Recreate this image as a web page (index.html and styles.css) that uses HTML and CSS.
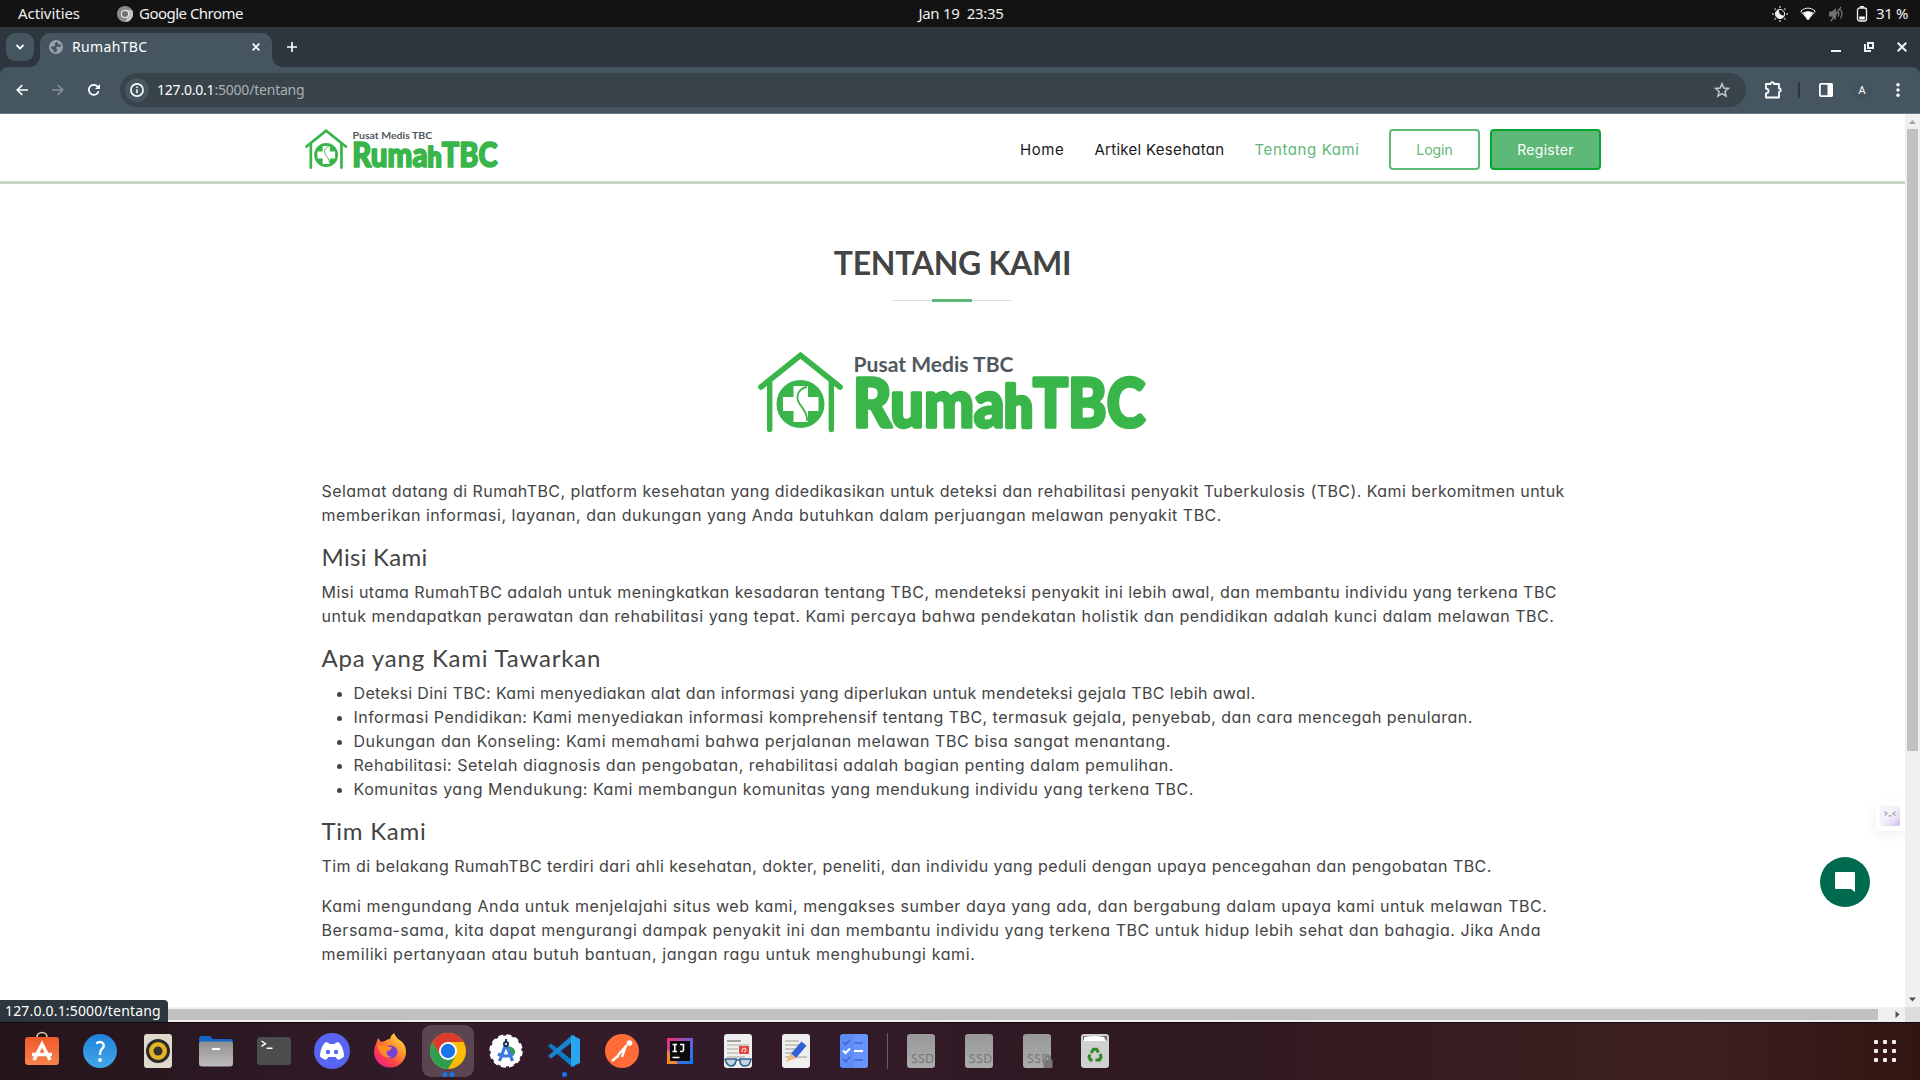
FILE: index.html
```html
<!DOCTYPE html>
<html lang="id">
<head>
<meta charset="utf-8">
<title>RumahTBC</title>
<link rel="stylesheet" href="styles.css">
</head>
<body>
<svg class="defs" width="0" height="0">
  <defs>
    <linearGradient id="orange" x1="0" y1="0" x2="0" y2="1"><stop offset="0" stop-color="#f0592b"/><stop offset="1" stop-color="#f7824d"/></linearGradient>
    <linearGradient id="blue" x1="0" y1="0" x2="0" y2="1"><stop offset="0" stop-color="#1f83dc"/><stop offset="1" stop-color="#43a7ea"/></linearGradient>
    <linearGradient id="grey" x1="0" y1="0" x2="0" y2="1"><stop offset="0" stop-color="#8f8f8f"/><stop offset="1" stop-color="#bdbdbd"/></linearGradient>
    <linearGradient id="disk" x1="0" y1="0" x2="0" y2="1"><stop offset="0" stop-color="#989898"/><stop offset="1" stop-color="#adadad"/></linearGradient>
    <linearGradient id="fox" x1="1" y1="0" x2="0.2" y2="1"><stop offset="0" stop-color="#fff04d"/><stop offset="0.4" stop-color="#ff9a2b"/><stop offset="0.75" stop-color="#ff3b4e"/><stop offset="1" stop-color="#e5208a"/></linearGradient>
    <linearGradient id="idea" x1="0" y1="0" x2="1" y2="1"><stop offset="0" stop-color="#fe2d6b"/><stop offset="0.5" stop-color="#6d5fd0"/><stop offset="1" stop-color="#087cfa"/></linearGradient>
    <linearGradient id="face" x1="0" y1="0" x2="1" y2="1"><stop offset="0.45" stop-color="#f1f4f8"/><stop offset="0.75" stop-color="#e6dbf6"/><stop offset="1" stop-color="#cfaef0"/></linearGradient>
    <symbol id="brand" viewBox="0 0 390 82">
      <g fill="none" stroke="#39b54a" stroke-linecap="round" stroke-linejoin="miter">
        <path stroke-width="5.6" d="M3 35 42.500 3.300 82 35"/>
        <path stroke-width="5.400" d="M11.700 30V77.500M73.300 30V77.500"/>
      </g>
      <circle cx="42.500" cy="52" r="24" fill="#39b54a"/>
      <path fill="#fff" d="M35.500 34h14.500v11h10.500v14h-10.500v11h-14.500v-11h-10.500v-14h10.500z"/>
      <path fill="none" stroke="#39b54a" stroke-width="1.800" d="M49 35C42 36 38 42 40 48.500 42 55 50 59 49 69"/>
      <text class="brand-sub" x="95.500" y="20.300" textLength="160" lengthAdjust="spacingAndGlyphs">Pusat Medis TBC</text>
      <text class="brand-name" x="95" y="75.300" textLength="180" lengthAdjust="spacingAndGlyphs">Ruma<tspan class="brand-h">h</tspan></text>
      <text class="brand-name" x="275" y="75.300" textLength="112" lengthAdjust="spacingAndGlyphs">TBC</text>
    </symbol>
  </defs>
</svg>

<div class="topbar">
  <div class="topbar-left">
    <span class="activities">Activities</span>
    <svg width="16" height="16" viewBox="0 0 16 16"><circle cx="8" cy="8" r="8" fill="#8b8b8b"/><path d="M8 4h7A8 8 0 0 1 8 16l3.500-6z" fill="#c4c4c4"/><circle cx="8" cy="8" r="4" fill="#eee"/><circle cx="8" cy="8" r="3" fill="#6f6f6f"/></svg>
    <span class="appname">Google Chrome</span>
  </div>
  <span class="clock">Jan 19&nbsp; 23:35</span>
  <div class="tray">
    <svg width="16" height="16" viewBox="0 0 16 16"><circle cx="8" cy="8" r="4.600" fill="none" stroke="#f2f2f2" stroke-width="1"/><path d="M7 3.400a4.600 4.600 0 1 0 5.600 6A4.800 4.800 0 0 1 7 3.400" fill="#f2f2f2"/><path d="M8 0v2M8 14v2M0 8h2M14 8h2M2.500 2.500l1.300 1.300M12.200 12.200l1.300 1.300M13.500 2.500l-1.300 1.300M3.800 12.200l-1.300 1.300" stroke="#aaa" stroke-width="1.600"/></svg>
    <svg width="16" height="16" viewBox="0 0 16 16"><path d="M.8 5C5 1.200 11 1.200 15.200 5L8 14z" fill="none" stroke="#eee" stroke-width="1"/><path d="M3 6.700c3-2 7-2 10 0L8 14z" fill="#fff"/></svg>
    <svg width="16" height="16" viewBox="0 0 16 16"><path d="M1 5.500h3L8 2v12l-4-3.500H1z" fill="#6f6f6f"/><path d="M10 5.500q1.600 2.500 0 5M12.500 3.500q3 4.500 0 9M3 15 13 1" fill="none" stroke="#777" stroke-width="1.300"/></svg>
    <svg width="12" height="16" viewBox="0 0 12 16"><rect x="1.500" y="2" width="9" height="13" rx="2" fill="none" stroke="#f2f2f2" stroke-width="1.300"/><path d="M4 .7h4" stroke="#f2f2f2" stroke-width="1.400"/><path d="M3.200 10.500h5.600v3H3.200z" fill="#fff"/></svg>
    <span class="percent">31 %</span>
  </div>
</div>

<div class="tabstrip">
  <div class="tab-search"><svg width="10" height="10" viewBox="0 0 10 10"><path d="M1.500 3 5 6.500 8.500 3" fill="none" stroke="#fff" stroke-width="1.800"/></svg></div>
  <div class="tab">
    <svg width="14" height="14" viewBox="0 0 14 14"><circle cx="7" cy="7" r="7" fill="#9aa3ab"/><path d="M8 1.500 5.500 3.500l1 1.500-2 1.500H2q0 3 2.500 3.200v2.500q3 .5 4-2L7 8l1.500-1.500L12 7l-.5-3-2 .5z" fill="#455660"/></svg>
    <span class="tab-title">RumahTBC</span>
    <svg class="tab-close" width="8" height="8" viewBox="0 0 8 8"><path d="M.7.7l6.600 6.600M7.300.7.7 7.300" stroke="#fff" stroke-width="1.700"/></svg>
  </div>
  <svg class="new-tab" width="10" height="10" viewBox="0 0 10 10"><path d="M5 0v10M0 5h10" stroke="#fff" stroke-width="1.600"/></svg>
  <div class="window-buttons">
    <svg width="10" height="10" viewBox="0 0 10 10"><path d="M0 9h10" stroke="#f0f0f0" stroke-width="2"/></svg>
    <svg width="10" height="10" viewBox="0 0 10 10"><path d="M4 1h5v5H4zM1 2v7h6" fill="none" stroke="#f0f0f0" stroke-width="2"/></svg>
    <svg width="10" height="10" viewBox="0 0 10 10"><path d="M.7.700l8.600 8.600M9.300.7.7 9.300" stroke="#f0f0f0" stroke-width="2"/></svg>
  </div>
</div>

<div class="toolbar">
  <div class="nav-buttons">
    <svg width="12" height="12" viewBox="0 0 12 12"><path d="M12 6H1.500M6.300 1 1.300 6l5 5" fill="none" stroke="#fff" stroke-width="1.700"/></svg>
    <svg width="12" height="12" viewBox="0 0 12 12"><path d="M0 6h10.500M5.700 1l5 5-5 5" fill="none" stroke="#84919a" stroke-width="1.700"/></svg>
    <svg width="12" height="12" viewBox="0 0 12 12"><path d="M10.600 7.300A5 5 0 1 1 9.800 2.800L11 4.300" fill="none" stroke="#fff" stroke-width="1.700"/><path d="M12 0v5H7z" fill="#fff"/></svg>
  </div>
  <div class="omnibox">
    <span class="site-info"><svg width="14" height="14" viewBox="0 0 14 14"><circle cx="7" cy="7" r="6.100" fill="none" stroke="#fff" stroke-width="1.600"/><path d="M7 6.300v4M7 3.500v1.600" stroke="#fff" stroke-width="1.500"/></svg></span>
    <span class="url"><b>127.0.0.1</b>:5000/tentang</span>
    <svg class="star" width="16" height="16" viewBox="0 0 16 16"><path d="M8 1.700l1.800 4.400 4.700.3-3.600 3.100 1.200 4.600L8 11.600l-4.100 2.500 1.200-4.600L1.500 6.400l4.700-.3z" fill="none" stroke="#c3c8cb" stroke-width="1.500"/></svg>
  </div>
  <div class="actions">
    <svg width="18" height="18" viewBox="0 0 18 18"><path d="M2 3h4.500a1.500 1.500 0 0 1 3.500 0H15v4.500a1.700 1.700 0 0 1 0 3.500v5.500H2v-4.200q2.600-.3 2.600-2.300T2 7.700z" fill="none" stroke="#fff" stroke-width="1.800" stroke-linejoin="round"/></svg>
    <i class="separator"></i>
    <svg width="16" height="16" viewBox="0 0 16 16"><rect x="1.900" y="1.900" width="12.200" height="12.200" rx="1" fill="none" stroke="#fff" stroke-width="1.800"/><path d="M9.500 1.500h5v13h-5z" fill="#fff"/></svg>
    <span class="avatar">A</span>
    <svg width="4" height="14" viewBox="0 0 4 14"><g fill="#fff"><circle cx="2" cy="1.800" r="1.700"/><circle cx="2" cy="7" r="1.700"/><circle cx="2" cy="12.200" r="1.700"/></g></svg>
  </div>
</div>

<div class="view">
  <div class="page">
    <header class="header">
      <svg class="header-logo" viewBox="0 0 390 82"><use href="#brand"/></svg>
      <nav class="menu">
        <a class="m1">Home</a><a class="m2">Artikel Kesehatan</a><a class="m3 active">Tentang Kami</a>
      </nav>
      <a class="btn login">Login</a>
      <a class="btn register">Register</a>
    </header>
    <main class="about">
      <h2 class="title">TENTANG KAMI</h2>
      <div class="divider"><i></i></div>
      <svg class="hero-logo" viewBox="0 0 390 82"><use href="#brand"/></svg>
      <p><span class="line l1">Selamat datang di RumahTBC, platform kesehatan yang didedikasikan untuk deteksi dan rehabilitasi penyakit Tuberkulosis (TBC). Kami berkomitmen untuk</span>
      <span class="line l2">memberikan informasi, layanan, dan dukungan yang Anda butuhkan dalam perjuangan melawan penyakit TBC.</span></p>
      <h4 class="h-misi">Misi Kami</h4>
      <p><span class="line l3">Misi utama RumahTBC adalah untuk meningkatkan kesadaran tentang TBC, mendeteksi penyakit ini lebih awal, dan membantu individu yang terkena TBC</span>
      <span class="line l4">untuk mendapatkan perawatan dan rehabilitasi yang tepat. Kami percaya bahwa pendekatan holistik dan pendidikan adalah kunci dalam melawan TBC.</span></p>
      <h4 class="h-apa">Apa yang Kami Tawarkan</h4>
      <ul>
        <li><span class="line l5">Deteksi Dini TBC: Kami menyediakan alat dan informasi yang diperlukan untuk mendeteksi gejala TBC lebih awal.</span></li>
        <li><span class="line l6">Informasi Pendidikan: Kami menyediakan informasi komprehensif tentang TBC, termasuk gejala, penyebab, dan cara mencegah penularan.</span></li>
        <li><span class="line l7">Dukungan dan Konseling: Kami memahami bahwa perjalanan melawan TBC bisa sangat menantang.</span></li>
        <li><span class="line l8">Rehabilitasi: Setelah diagnosis dan pengobatan, rehabilitasi adalah bagian penting dalam pemulihan.</span></li>
        <li><span class="line l9">Komunitas yang Mendukung: Kami membangun komunitas yang mendukung individu yang terkena TBC.</span></li>
      </ul>
      <h4 class="h-tim">Tim Kami</h4>
      <p><span class="line l10">Tim di belakang RumahTBC terdiri dari ahli kesehatan, dokter, peneliti, dan individu yang peduli dengan upaya pencegahan dan pengobatan TBC.</span></p>
      <p><span class="line l11">Kami mengundang Anda untuk menjelajahi situs web kami, mengakses sumber daya yang ada, dan bergabung dalam upaya kami untuk melawan TBC.</span>
      <span class="line l12">Bersama-sama, kita dapat mengurangi dampak penyakit ini dan membantu individu yang terkena TBC untuk hidup lebih sehat dan bahagia. Jika Anda</span>
      <span class="line l13">memiliki pertanyaan atau butuh bantuan, jangan ragu untuk menghubungi kami.</span></p>
    </main>
  </div>
  <div class="vscroll">
    <svg width="15" height="15" viewBox="0 0 15 15"><path d="M4 10h7L7.500 6z" fill="#a3a3a3"/></svg>
    <i class="thumb"></i>
    <svg class="end" width="15" height="15" viewBox="0 0 15 15"><path d="M4 5.500h7L7.500 9.500z" fill="#505050"/></svg>
  </div>
  <div class="hscroll"><i class="thumb"></i><svg width="15" height="15" viewBox="0 0 15 15"><path d="M5.500 4v7L9.500 7.500z" fill="#505050"/></svg></div>
  <div class="corner"></div>
  <div class="side-tab"><svg width="20" height="20" viewBox="0 0 20 20"><rect width="20" height="20" rx="2.500" fill="url(#face)"/><path d="M4.500 5.500 7 7.500 4.500 9.500M15.500 5.500 13 7.500l2.500 2M8.500 9.500q1.500 1.200 3 0" fill="none" stroke="#a2a5ab" stroke-width="1.300"/></svg></div>
  <div class="chat"><svg width="20" height="20" viewBox="0 0 20 20"><path d="M1 0h18q1 0 1 1v19l-4-3H1q-1 0-1-1V1q0-1 1-1z" fill="#fff"/></svg></div>
  <div class="status">127.0.0.1:5000/tentang</div>
</div>

<div class="dock">
  <span><svg viewBox="-22 -22 44 44"><path d="M-5-12v-2a5 4.500 0 0 1 10 0v2" fill="none" stroke="#e8c9a8" stroke-width="1.600"/><rect x="-17" y="-14" width="34" height="28" rx="3" fill="url(#orange)"/><path d="M-8 9 0-7 8 9M-10 3.500h20" fill="none" stroke="#fff" stroke-width="3.400"/></svg></span>
  <span><svg viewBox="-22 -22 44 44"><circle r="17" fill="url(#blue)"/><path d="M-3.800-7.500q4-3 7 0 1.500 3.500-1.500 5.500Q0 0 0 4" fill="none" stroke="#fff" stroke-width="2.400"/><circle cy="9" r="1.900" fill="#fff"/></svg></span>
  <span><svg viewBox="-22 -22 44 44"><rect x="-14" y="-17" width="28" height="34" rx="3" fill="#dfd9cc"/><circle r="12" fill="#2b2b2b"/><circle r="9" fill="#e6b422"/><circle r="4.500" fill="#333"/></svg></span>
  <span><svg viewBox="-22 -22 44 44"><path d="M-17-12q0-3 3-3h8l3 3h17q3 0 3 3v5h-34z" fill="#1565c8"/><rect x="-17" y="-9.500" width="34" height="25" rx="3" fill="url(#grey)"/><path d="M-4-2h8" stroke="#fff" stroke-width="2.200"/></svg></span>
  <span><svg viewBox="-22 -22 44 44"><rect x="-17" y="-14" width="34" height="28" rx="3" fill="#4c4c4c"/><path d="M-12.500-10l4 2.700-4 2.700M-7.500-2.800h6" fill="none" stroke="#fff" stroke-width="1.400"/></svg></span>
  <span><svg viewBox="-22 -22 44 44"><circle r="18" fill="#5865f2"/><path d="M-7-8.500Q-4-9.500-2.500-7h5Q4-9.500 7-8.500q5 6 5 14-3 3-6.500 3.200L3.800 6h-7.600l-1.700 2.700Q-9 8.500-12 5.500-12-2.500-7-8.500z" fill="#fff"/><circle cx="-4" cy="1" r="2.200" fill="#5865f2"/><circle cx="4" cy="1" r="2.200" fill="#5865f2"/></svg></span>
  <span><svg viewBox="-22 -22 44 44"><path d="M-14-7l2-6 3 4 4-1q2-2 5-2 1-4 4-6 2 5 7 8 5 4 5 11A16 15.500 0 0 1-16 1q0-4 2-8z" fill="url(#fox)"/><circle cx="1" cy="1" r="6.500" fill="#7542d8"/><path d="M-13-6q6-1 9 2h6q-1 4-5 4-2 5 5 6-9 2-12-5z" fill="#ff8c25"/></svg></span>
  <span class="focused"><svg viewBox="-22 -22 44 44"><circle r="18" fill="#fbbc05"/><path d="M-15.600-9A18 18 0 0 0 0 18L7.800 4.500H-7.800z" fill="#2f9e4f"/><path d="M-15.600-9A18 18 0 0 1 15.600-9H0L-7.800 4.500z" fill="#db3a2e"/><circle r="9" fill="#fff"/><circle r="7.200" fill="#1a73e8"/></svg><i></i><i></i></span>
  <span><svg viewBox="-22 -22 44 44"><circle r="15.500" fill="#fff"/><circle r="15.500" fill="none" stroke="#fff" stroke-width="2.400" stroke-dasharray="5 3.100"/><path d="M2-5q8 1 7 8L3 5z" fill="#3a9b54"/><path d="M-6.500 10 0-7 6.500 10M-8 3q8 4 15 0" fill="none" stroke="#3c78e0" stroke-width="3.200"/><circle cy="-7" r="3" fill="#20324f"/><path d="M0-12v5" stroke="#20324f" stroke-width="2"/><circle cy="-7" r="1.100" fill="#fff"/></svg></span>
  <span><svg viewBox="-22 -22 44 44"><path d="M-16-5l3-2.500L11 11v5L7 15z" fill="#0a7cc4"/><path d="M-16 5l3 2.500L11-11v-5l-4 1z" fill="#1586cf"/><path d="M7-16l9 4v24l-9 4V-16z" fill="#2ba5ee"/></svg><i></i></span>
  <span><svg viewBox="-22 -22 44 44"><circle r="17" fill="#ff6c37"/><circle cx="7.500" cy="-8" r="2.800" fill="#fff"/><path d="M5-6-4 4M3.500-4.500 0 6M-3 4l-7 6" stroke="#fff" stroke-width="2.400" fill="none"/></svg></span>
  <span><svg viewBox="-22 -22 44 44"><path d="M-13-13h26v26h-26z" fill="url(#idea)"/><path d="M-13-2v15h11z" fill="#f08a2c"/><path d="M-10-10h20v20h-20z" fill="#0b0b0d"/><path d="M-7.500-6.500h4.500M-5.200-6.500v7M-7.500.5h4.500M0-6.500h3.500v5.500q0 2-3.500 1.300M-7.500 6.500h7" stroke="#fff" stroke-width="1.600" fill="none"/></svg></span>
  <span><svg viewBox="-22 -22 44 44"><rect x="-14" y="-17" width="28" height="34" rx="3" fill="#efefef"/><path d="M-11-10H3" stroke="#8e897f" stroke-width="1.500"/><path d="M-11-6h22M-11-2H0M-11 2H0M-11 6h18" stroke="#c2bdb2" stroke-width="1.300"/><path d="M1-5h10v8H1z" fill="#e5443b"/><path d="M4 1q0-4 2-4t2 2-2 2" stroke="#fff" fill="none"/><path d="M-13 8h11v2q-1 5-5 5t-6-7M2 8h11q-1 7-6 7t-5-5zM-2 9h4" fill="#c3d3e0" stroke="#2c6091" stroke-width="1.500"/></svg></span>
  <span><svg viewBox="-22 -22 44 44"><rect x="-14" y="-17" width="28" height="34" rx="3" fill="#efefef"/><path d="M-11-10H3M-11-6H5M-11-2H0M-11 2h8M-11 6h22" stroke="#bcb7a8" stroke-width="1.300"/><path d="M-5 2.500 5.500-9.500l5 4.300L0 7z" fill="#2f62d6"/><path d="M-5 2.500 0 7l-10.500 4z" fill="#efb67c"/></svg></span>
  <span><svg viewBox="-22 -22 44 44"><rect x="-14" y="-17" width="28" height="34" rx="3" fill="#5f8df8"/><path d="M0-17h11q3 0 3 3v28q0 3-3 3H0z" fill="#6f9aff" opacity=".6"/><path d="M-11-9l2.500 2.500L-4-11M0-8h9M-11 8l2.500 2.500L-4 6M0 9h9" fill="none" stroke="#3f68cf" stroke-width="1.700"/><path d="M-11-.5-8.500 2-4-2.500M0 0h9" fill="none" stroke="#fff" stroke-width="2"/></svg></span>
  <b class="dock-sep"></b>
  <span><svg viewBox="-22 -22 44 44"><rect x="-14" y="-17" width="28" height="34" rx="3" fill="url(#disk)"/><text class="ssd" x="-10" y="12" textLength="23">SSD</text></svg></span>
  <span><svg viewBox="-22 -22 44 44"><rect x="-14" y="-17" width="28" height="34" rx="3" fill="url(#disk)"/><text class="ssd" x="-10" y="12" textLength="23">SSD</text></svg></span>
  <span><svg viewBox="-22 -22 44 44"><rect x="-14" y="-17" width="28" height="34" rx="3" fill="url(#disk)"/><text class="ssd" x="-10" y="12" textLength="23">SSD</text><path d="M6.500 9h9v8h-9z" fill="#777"/><path d="M8.500 9.500V7.500a2.500 2.500 0 0 1 5 0v2" fill="none" stroke="#777" stroke-width="1.600"/></svg></span>
  <span><svg viewBox="-22 -22 44 44"><rect x="-14" y="-17" width="28" height="34" rx="3" fill="#d0d0d0"/><path d="M-12-15h24v3q0 2-2 2h-20q-2 0-2-2z" fill="#6e6e6e"/><path d="M-11-14q11-2 20 0l2 4h-22z" fill="#fff"/><g fill="none" stroke="#2a8a24" stroke-width="3"><path d="M-4 2-1.500-1.800h3L3.500 1.500"/><path d="M5.200 3 6 6 4.500 9H.500"/><path d="M-2.500 9h-2L-6 6l1-2.500"/></g></svg></span>
  <svg class="grid-icon" width="24" height="24" viewBox="0 0 24 24"><g fill="#f2f0ef"><rect x="1" y="1" width="4" height="4" rx="1"/><rect x="10" y="1" width="4" height="4" rx="1"/><rect x="19" y="1" width="4" height="4" rx="1"/><rect x="1" y="10" width="4" height="4" rx="1"/><rect x="10" y="10" width="4" height="4" rx="1"/><rect x="19" y="10" width="4" height="4" rx="1"/><rect x="1" y="19" width="4" height="4" rx="1"/><rect x="10" y="19" width="4" height="4" rx="1"/><rect x="19" y="19" width="4" height="4" rx="1"/></g></svg>
</div>
</body>
</html>
```
FILE: styles.css
```css
* { box-sizing: border-box; }
body { margin: 0; width: 1920px; height: 1080px; overflow: hidden; display: flex; flex-direction: column; background: #2c363c; font-family: Inter, sans-serif; }
svg { display: block; flex: none; }
.defs { position: absolute; }

.topbar { height: 27px; background: #131313; color: #f0f0f0; display: grid; grid-template-columns: 1fr auto 1fr; align-items: center; font: 15px/27px "Noto Sans", sans-serif; }
.topbar-left { display: flex; align-items: center; padding-left: 18px; }
.activities { width: 99px; letter-spacing: -0.05px; }
.appname { margin-left: 6px; letter-spacing: -0.52px; }
.clock { letter-spacing: -0.3px; padding-left: 2px; }
.tray { display: flex; align-items: center; justify-content: flex-end; gap: 12px; padding-right: 12px; }
.percent { margin-left: -4px; letter-spacing: -0.4px; white-space: nowrap; }
.tray svg:nth-child(4) { margin-right: 0; }

.tabstrip { height: 40px; display: flex; align-items: center; padding: 0 13px 0 6px; }
.tab-search { width: 28px; height: 28px; border-radius: 9px; background: #455660; display: grid; place-items: center; }
.tab { align-self: flex-end; height: 34px; width: 232px; margin-left: 6px; padding: 0 12px 6px 9px; border-radius: 10px 10px 0 0; background: #455660; color: #fff; display: flex; align-items: center; position: relative; font: 14px/18px "Noto Sans", sans-serif; }
.tab::before, .tab::after { content: ""; position: absolute; bottom: 0; width: 10px; height: 10px; }
.tab::before { left: -10px; background: radial-gradient(circle at 0 0, transparent 9.500px, #455660 10px); }
.tab::after { right: -10px; background: radial-gradient(circle at 100% 0, transparent 9.500px, #455660 10px); }
.tab-title { margin-left: 9px; letter-spacing: 0.35px; }
.tab-close { margin-left: auto; }
.new-tab { margin-left: 15px; }
.window-buttons { display: flex; gap: 23px; margin-left: auto; }

.toolbar { height: 47px; background: #455660; border-bottom: 1px solid #6b7a83; border-radius: 8px 8px 0 0; display: flex; align-items: center; padding: 0 0 1px 16px; }
.nav-buttons { display: flex; gap: 24px; }
.omnibox { margin-left: 20px; width: 1626px; height: 34px; border-radius: 17px; background: #38434a; display: flex; align-items: center; padding: 0 16px 0 5px; }
.site-info { width: 24px; height: 24px; border-radius: 50%; background: #455660; display: grid; place-items: center; }
.url { margin: -1px 0 0 8px; color: #a9b0b4; font: 14px "Noto Sans", sans-serif; letter-spacing: -0.21px; }
.url b { font-weight: 400; color: #fff; }
.star { margin-left: auto; }
.actions { display: flex; align-items: center; margin-left: 18px; }
.separator { width: 2px; height: 16px; background: #2c363c; margin: 0 18px 0 16px; }
.avatar { width: 20px; height: 20px; border-radius: 50%; background: #40535f; color: #fff; font: 11px/20px "Noto Sans", sans-serif; text-align: center; margin: 0 24px 0 18px; }

.view { height: 908px; position: relative; display: grid; grid-template: 893px 15px / 1905px 15px; }
.page { overflow: hidden; background: #fff; color: #444; }
.header { height: 70px; border-bottom: 3px solid #c5d6c4; padding: 15px 304px 11px 305px; display: flex; align-items: center; font-size: 15px; }
.header-logo { width: 194px; height: 41px; }
.menu { margin-left: auto; padding-bottom: 1px; display: flex; gap: 30px; color: #191919; white-space: nowrap; }
.menu a, .btn, .line { font-feature-settings: "cv11"; }
.menu .active { color: #5eb87a; }
.m1 { letter-spacing: 0.6px; }
.m2 { letter-spacing: 0.3px; }
.m3 { letter-spacing: 0.6px; }
.btn { height: 41px; padding-bottom: 1px; border: 2px solid #5eb877; border-radius: 4px; display: grid; place-items: center; font-size: 14px; }
.login { width: 91px; margin-left: 29.500px; color: #5eb877; }
.register { width: 111px; margin-left: 10px; background: #5eb877; border-color: #06a52f; color: #fff; letter-spacing: 0.3px; }

.about { padding: 60px 0 0 321.500px; font-size: 16px; line-height: 24px; }
.title { margin: 0 321.500px 0 0; text-align: center; font: 700 32px/37px Lato, sans-serif; letter-spacing: -0.3px; color: #444; }
.divider { width: 120px; height: 3px; margin: 18px auto 0 570.500px; background: linear-gradient(#fff 1px, #ddd 1px 2px, #fff 2px); display: flex; justify-content: center; }
.divider i { width: 40px; background: #5eb877; }
.hero-logo { width: 390px; height: 82px; margin: 50px 0 45px 436.500px; }
.brand-sub { font: 700 20.500px Lato, sans-serif; fill: #50585f; }
.brand-name { font: 900 67px Lato, sans-serif; fill: #39b54a; stroke: #39b54a; stroke-width: 3.5px; stroke-linejoin: round; }
.brand-h { font-size: 57px; stroke-width: 4.5px; }
p { margin: 0 0 16px; }
.line { display: block; width: max-content; white-space: nowrap; }
h4 { margin: 0 0 8px; font: 400 24px/28.800px Lato, sans-serif; }
.h-misi { letter-spacing: 0.29px; }
.h-apa { letter-spacing: 0.8px; }
.h-tim { letter-spacing: 0.75px; margin-bottom: 9px; }
ul { margin: 0 0 16px; padding-left: 32px; }
.l1 { letter-spacing: 0.435px; }
.l2 { letter-spacing: 0.516px; }
.l3 { letter-spacing: 0.457px; }
.l4 { letter-spacing: 0.528px; }
.l5 { letter-spacing: 0.37px; }
.l6 { letter-spacing: 0.461px; }
.l7 { letter-spacing: 0.569px; }
.l8 { letter-spacing: 0.524px; }
.l9 { letter-spacing: 0.53px; }
.l10 { letter-spacing: 0.439px; }
.l11 { letter-spacing: 0.549px; }
.l12 { letter-spacing: 0.523px; }
.l13 { letter-spacing: 0.605px; }

.vscroll { background: #f0f0f0; display: flex; flex-direction: column; align-items: center; }
.vscroll .thumb { width: 11px; height: 622px; background: #c1c1c1; }
.vscroll .end { margin-top: auto; }
.hscroll { background: #f0f0f0; display: flex; align-items: center; justify-content: flex-end; }
.hscroll .thumb { width: 1863px; height: 11px; background: #c1c1c1; margin-right: 12px; }
.corner { background: #dcdcdc; }
.side-tab { position: absolute; right: 15px; top: 687px; width: 29px; height: 30px; padding: 5px 4px; background: #fff; border-radius: 4px 0 0 4px; box-shadow: -1px 4px 12px rgba(0,0,0,.06); clip-path: inset(-20px 0 -30px -30px); }
.chat { position: absolute; left: 1820px; top: 743px; width: 50px; height: 50px; border-radius: 50%; background: #006a4e; display: grid; place-items: center; }
.status { position: absolute; left: 0; bottom: 0; width: 168px; height: 22px; border-radius: 0 4px 0 0; background: #2c363c; color: #fff; font: 14px/22px "Noto Sans", sans-serif; letter-spacing: 0.17px; padding-left: 5px; }

.dock { height: 58px; border-top: 1px solid #100a0d; background: linear-gradient(90deg, #24151b, #331b29 23%, #341b2a 38%, #2f1821 60%, #3d211f 88%, #321511); display: flex; align-items: center; padding: 0 23px 1px 13px; }
.dock span { width: 58px; height: 52px; display: flex; align-items: center; justify-content: center; position: relative; }
.dock span svg { width: 44px; height: 44px; }
.dock .focused { width: 52px; margin: 0 3px; border-radius: 9px; background: #5b4551; }
.dock i { position: absolute; bottom: 0; left: calc(50% - 2.500px); width: 5px; height: 5px; border-radius: 50%; background: #1a73e8; }
.focused i { transform: translateX(-3.500px); }
.focused i + i { transform: translateX(3.500px); }
.dock-sep { width: 1px; height: 36px; margin: 0 4px; background: #6e5a62; }
.ssd { font: 12px "Noto Sans", sans-serif; fill: #777; }
.grid-icon { margin-left: auto; }
```
